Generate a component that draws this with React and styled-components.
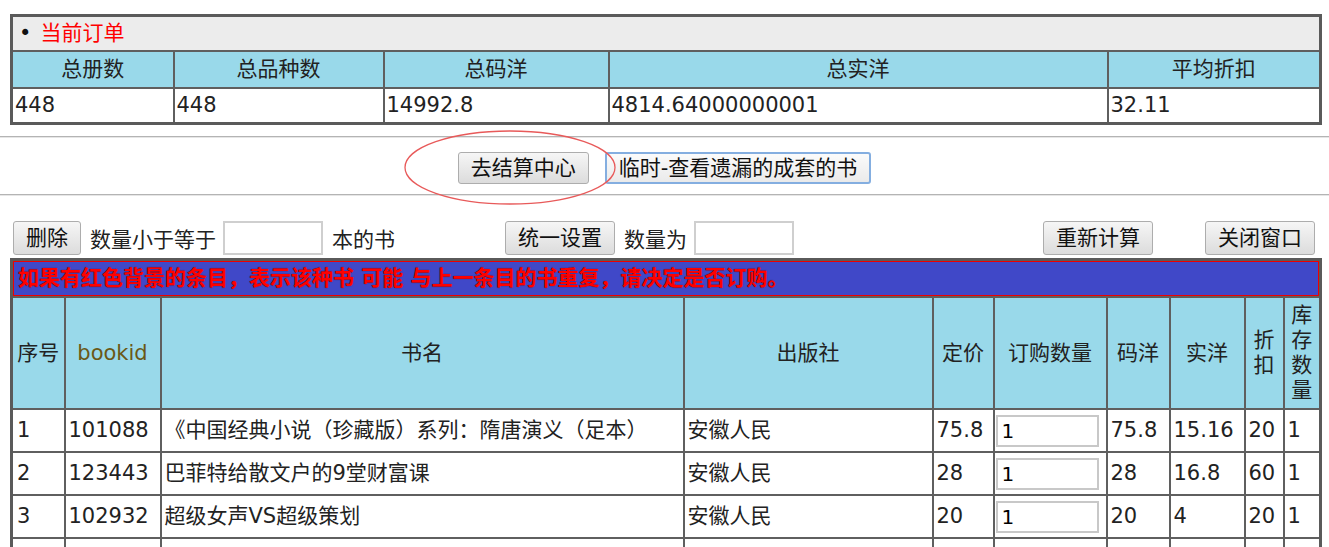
import React from "react";
import styled, { createGlobalStyle } from "styled-components";

const GlobalStyle = createGlobalStyle`
  html, body {
    margin: 0;
    padding: 0;
    background: #fff;
  }
  body {
    font-family: "DejaVu Sans", "Noto Sans CJK SC", sans-serif;
    font-size: 21px;
    color: #222;
  }
`;

const Page = styled.div`
  padding-top: 14px;
  width: 1329px;
`;

const Grid = styled.table`
  width: 1309px;
  margin: 0 10px;
  border-collapse: collapse;
  table-layout: fixed;
  border: 3px solid #5a5a5a;
  line-height: 25px;

  td, th {
    border: 2px solid #5f5f5f;
  }
`;

const TitleCell = styled.td`
  background: #ececec;
  height: 33px;
  padding: 0 6px;
  color: #f00;
  text-align: left;

  &::before {
    content: "•";
    color: #111;
    margin-right: 9px;
  }
`;

const Head = styled.th`
  background: #99d9ea;
  font-weight: normal;
  text-align: center;
  padding: 0 2px;
  height: ${(p) => p.$h || 35}px;
  color: ${(p) => (p.$latin ? "#6a5816" : "#222")};
`;

const Cell = styled.td`
  background: #fff;
  height: ${(p) => p.$h || 33}px;
  padding: 0 ${(p) => p.$pad ?? 2}px;
  white-space: nowrap;
  overflow: hidden;
`;

const Rule = styled.hr`
  margin: ${(p) => p.$top}px 0 0;
  height: 0;
  border: none;
  border-top: 1px solid #b4b4b4;
  border-bottom: 1px solid #e6e6e6;
`;

const ActionRow = styled.div`
  display: flex;
  justify-content: center;
  gap: 16px;
  padding: 14px 0 10px;
`;

const Marked = styled.span`
  position: relative;
  display: inline-flex;
`;

const Ellipse = styled.svg`
  position: absolute;
  left: -54px;
  top: -22px;
  width: 212px;
  height: 75px;
  pointer-events: none;
  overflow: visible;
`;

const Button = styled.button`
  font: inherit;
  font-size: 21px;
  line-height: 1;
  height: ${(p) => p.$h || 34}px;
  padding: 0 12px;
  color: #111;
  border-radius: 3px;
  border: ${(p) => (p.$focused ? "2px solid #84aee0" : "1px solid #adadad")};
  background: ${(p) =>
    p.$focused
      ? "linear-gradient(#fbfbfb, #eaeaea)"
      : "linear-gradient(#f6f6f6, #dcdcdc)"};
  cursor: pointer;
`;

const Toolbar = styled.div`
  display: grid;
  grid-template-columns: 492px 538px 162px 117px;
  margin: 25px 10px 0;
  width: 1309px;
`;

const ToolCell = styled.div`
  display: flex;
  align-items: center;
  gap: 9px;
  padding-left: 3px;
  white-space: nowrap;
`;

const Field = styled.input`
  width: 100px;
  height: 34px;
  box-sizing: border-box;
  border: 2px solid #cfcfcf;
  font: inherit;
  padding: 0 4px;
  margin-left: -2px;
`;

const OrderGrid = styled(Grid)`
  margin-top: 3px;
`;

const Notice = styled.td`
  background: #4048c8;
  box-shadow: inset 0 0 0 1px #e00;
  height: 35px;
  padding: 0 5px;
  color: #f00;
  font-weight: 700;
  text-shadow: 0 0 1px #300;
  white-space: nowrap;
`;

const QtyInput = styled.input`
  width: 103px;
  height: 32px;
  box-sizing: border-box;
  border: 2px solid #c8c8c8;
  font: inherit;
  font-size: 20px;
  padding: 0 4px;
  display: block;
`;

const summaryCols = [162, 210, 225, 499, 213];
const orderCols = [53, 96, 523, 249, 61, 113, 63, 75, 39, 37];

const summaryHead = ["总册数", "总品种数", "总码洋", "总实洋", "平均折扣"];
const summaryVals = ["448", "448", "14992.8", "4814.64000000001", "32.11"];

const orderHead = [
  "序号",
  "bookid",
  "书名",
  "出版社",
  "定价",
  "订购数量",
  "码洋",
  "实洋",
  "折扣",
  "库存数量",
];

const books = [
  ["1", "101088", "《中国经典小说（珍藏版）系列：隋唐演义（足本）", "安徽人民", "75.8", "1", "75.8", "15.16", "20", "1"],
  ["2", "123443", "巴菲特给散文户的9堂财富课", "安徽人民", "28", "1", "28", "16.8", "60", "1"],
  ["3", "102932", "超级女声VS超级策划", "安徽人民", "20", "1", "20", "4", "20", "1"],
];

export default function App() {
  return (
    <Page>
      <GlobalStyle />
      <Grid>
        <colgroup>
          {summaryCols.map((w, i) => (
            <col key={i} style={{ width: w }} />
          ))}
        </colgroup>
        <tbody>
          <tr>
            <TitleCell colSpan={5}>当前订单</TitleCell>
          </tr>
          <tr>
            {summaryHead.map((h) => (
              <Head key={h}>{h}</Head>
            ))}
          </tr>
          <tr>
            {summaryVals.map((v, i) => (
              <Cell key={i}>{v}</Cell>
            ))}
          </tr>
        </tbody>
      </Grid>

      <Rule $top={11} />
      <ActionRow>
        <Marked>
          <Button $h={32}>去结算中心</Button>
          <Ellipse viewBox="0 0 212 75">
            <ellipse cx="106" cy="37.5" rx="105" ry="36.5" fill="none" stroke="#e85a5a" strokeWidth="1.3" />
          </Ellipse>
        </Marked>
        <Button $h={32} $focused>
          临时-查看遗漏的成套的书
        </Button>
      </ActionRow>
      <Rule $top={0} />

      <Toolbar>
        <ToolCell>
          <Button>删除</Button>
          <span>数量小于等于</span>
          <Field />
          <span>本的书</span>
        </ToolCell>
        <ToolCell>
          <Button>统一设置</Button>
          <span>数量为</span>
          <Field />
        </ToolCell>
        <ToolCell>
          <Button>重新计算</Button>
        </ToolCell>
        <ToolCell>
          <Button>关闭窗口</Button>
        </ToolCell>
      </Toolbar>

      <OrderGrid>
        <colgroup>
          {orderCols.map((w, i) => (
            <col key={i} style={{ width: w }} />
          ))}
        </colgroup>
        <tbody>
          <tr>
            <Notice colSpan={10}>
              如果有红色背景的条目，表示该种书 可能 与上一条目的书重复，请决定是否订购。
            </Notice>
          </tr>
          <tr>
            {orderHead.map((h) => (
              <Head key={h} $h={110} $latin={h === "bookid"}>
                {h}
              </Head>
            ))}
          </tr>
          {books.map((b) => (
            <tr key={b[0]}>
              {b.map((v, i) =>
                i === 5 ? (
                  <Cell key={i} $h={41} $pad={1}>
                    <QtyInput defaultValue={v} />
                  </Cell>
                ) : (
                  <Cell key={i} $h={41} $pad={i === 0 ? 4 : 3}>
                    {v}
                  </Cell>
                )
              )}
            </tr>
          ))}
          <tr>
            {orderCols.map((_, i) => (
              <Cell key={i} $h={41} />
            ))}
          </tr>
        </tbody>
      </OrderGrid>
    </Page>
  );
}
